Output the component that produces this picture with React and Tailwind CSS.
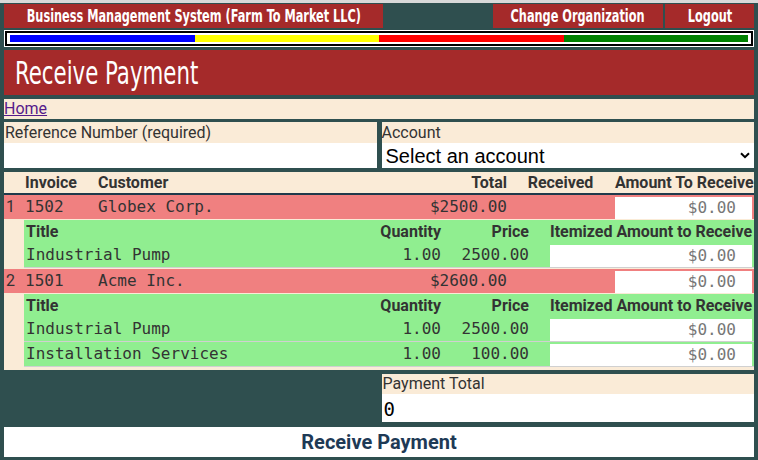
import { useState } from 'react';

const invoices = [
  {
    n: 1,
    id: '1502',
    customer: 'Globex Corp.',
    total: '$2500.00',
    items: [{ title: 'Industrial Pump', qty: '1.00', price: '2500.00' }],
  },
  {
    n: 2,
    id: '1501',
    customer: 'Acme Inc.',
    total: '$2600.00',
    items: [
      { title: 'Industrial Pump', qty: '1.00', price: '2500.00' },
      { title: 'Installation Services', qty: '1.00', price: '100.00' },
    ],
  },
];

const mono = "font-['DejaVu_Sans_Mono',monospace]";
const narrow = "font-['DejaVu_Sans_Condensed','DejaVu_Sans',sans-serif]";

function AmountInput() {
  return (
    <input
      type="text"
      placeholder="$0.00"
      className={`w-full h-full bg-white text-right pr-4 text-[16px] text-[#333] placeholder:text-[#777] outline-none ${mono}`}
    />
  );
}

function NavItem({ className, children }) {
  return (
    <div className={`bg-[#a52a2a] flex items-center justify-center overflow-hidden ${className}`}>
      <span className="inline-block whitespace-nowrap scale-x-[0.74]">{children}</span>
    </div>
  );
}

function InvoiceRows({ inv }) {
  return (
    <>
      {/* invoice row */}
      <div className="flex items-center h-[24px] mb-px bg-[#f08080] text-[16px] text-[#333]">
        <div className="w-[20px] pl-[2px]">{inv.n}</div>
        <div className={`w-[74px] pl-px ${mono}`}>{inv.id}</div>
        <div className={`flex-1 ${mono}`}>{inv.customer}</div>
        <div className={`w-[100px] text-right pr-px ${mono}`}>{inv.total}</div>
        <div className="w-[105px]" />
        <div className="w-[141px] h-full px-[2px] py-px">
          <AmountInput />
        </div>
      </div>

      {/* line items */}
      <div className="flex mb-px">
        <div className="w-[20px]" />
        <div className="flex-1 bg-[#90ee90] text-[16px] text-[#333]">
          <div className="flex items-center h-[23px] font-bold">
            <div className="flex-1 pl-[2px]">Title</div>
            <div className="w-[64px] text-right pr-px">Quantity</div>
            <div className="w-[106px] text-right pr-[19px]">Price</div>
            <div className="w-[206px] pl-[2px]">Itemized Amount to Receive</div>
          </div>
          {inv.items.map((it, i) => (
            <div key={i} className={`flex items-center h-[25px] border-b border-[#d0d0d0] ${mono}`}>
              <div className="flex-1 pl-[2px]">{it.title}</div>
              <div className="w-[64px] text-right pr-px">{it.qty}</div>
              <div className="w-[106px] text-right pr-[19px]">{it.price}</div>
              <div className="w-[206px] h-full px-[2px] py-px">
                <AmountInput />
              </div>
            </div>
          ))}
        </div>
      </div>
    </>
  );
}

export default function App() {
  const [account, setAccount] = useState('');

  return (
    <div className="w-[758px] h-[460px] overflow-hidden bg-[#2f4f4f] font-['Roboto',sans-serif] text-[#333]">
      <div className="h-[3px] bg-[#d9d9d9]" />

      {/* top nav */}
      <nav className={`flex h-[24px] mt-px px-1 text-white font-bold text-[17px] leading-none ${narrow}`}>
        <NavItem className="w-[379px]">Business Management System (Farm To Market LLC)</NavItem>
        <div className="flex-1" />
        <NavItem className="w-[170px]">Change Organization</NavItem>
        <NavItem className="w-[89px] ml-[2px]">Logout</NavItem>
      </nav>

      {/* progress stripe */}
      <div className="mx-1 mt-[2px] bg-white p-px">
        <div className="border-2 border-black bg-white px-[3px] py-[2px]">
          <div className="flex h-[7px]">
            <div className="flex-1 bg-[#0000ff]" />
            <div className="flex-1 bg-[#ffff00]" />
            <div className="flex-1 bg-[#ff0000]" />
            <div className="flex-1 bg-[#008000]" />
          </div>
        </div>
      </div>

      <header className="mx-1 mt-[3px] h-[45px] bg-[#a52a2a] flex items-center pl-[11px]">
        <h1 className={`text-white text-[32px] leading-none whitespace-nowrap origin-left scale-x-[0.74] ${narrow}`}>
          Receive Payment
        </h1>
      </header>

      <div className="mx-1 mt-1 h-[20px] bg-[#faebd7] flex items-center text-[16px]">
        <a href="#" className="text-[#551a8b] underline">Home</a>
      </div>

      {/* form fields */}
      <div className="mt-[3px] px-1 grid grid-cols-2 gap-[5px] text-[16px]">
        <div>
          <label className="block h-[21px] bg-[#faebd7] pl-px leading-[21px]">Reference Number (required)</label>
          <input type="text" className="block w-full h-[25px] bg-white outline-none px-1" />
        </div>
        <div>
          <label className="block h-[21px] bg-[#faebd7] leading-[21px]">Account</label>
          <div className="relative h-[25px] bg-white">
            <select
              value={account}
              onChange={(e) => setAccount(e.target.value)}
              className="appearance-none w-full h-full bg-white pl-1 text-[20px] leading-none text-black font-['Liberation_Sans',Arial,sans-serif] outline-none"
            >
              <option value="">Select an account</option>
            </select>
            <svg className="absolute right-[4px] top-[9px] pointer-events-none" width="10" height="7" viewBox="0 0 10 7">
              <path d="M1 1.2 L5 5.2 L9 1.2" fill="none" stroke="#000" strokeWidth="2" />
            </svg>
          </div>
        </div>
      </div>

      {/* invoices table */}
      <div className="mt-1 mx-1 bg-[#faebd7] pb-[2px] text-[16px]">
        <div className="flex items-center h-[23px] border-b-2 border-[#203a4c] font-bold">
          <div className="w-[20px]" />
          <div className="w-[74px] pl-px">Invoice</div>
          <div className="flex-1">Customer</div>
          <div className="w-[100px] text-right pr-px">Total</div>
          <div className="w-[105px] text-center">Received</div>
          <div className="w-[141px] pl-[2px]">Amount To Receive</div>
        </div>
        {invoices.map((inv) => (
          <InvoiceRows key={inv.id} inv={inv} />
        ))}
      </div>

      {/* payment total */}
      <div className="mt-1 px-1 grid grid-cols-2 gap-[5px] text-[16px]">
        <div />
        <div>
          <label className="block h-[20px] bg-[#faebd7] pl-px leading-[20px]">Payment Total</label>
          <input
            type="text"
            defaultValue="0"
            className={`block w-full h-[28px] bg-white outline-none pl-[2px] pt-[2px] text-[19px] leading-none text-black ${mono}`}
          />
        </div>
      </div>

      <button className="block mx-1 mt-[5px] w-[750px] h-[30px] bg-white text-[20px] font-bold text-[#1e3a56]">
        Receive Payment
      </button>
    </div>
  );
}
